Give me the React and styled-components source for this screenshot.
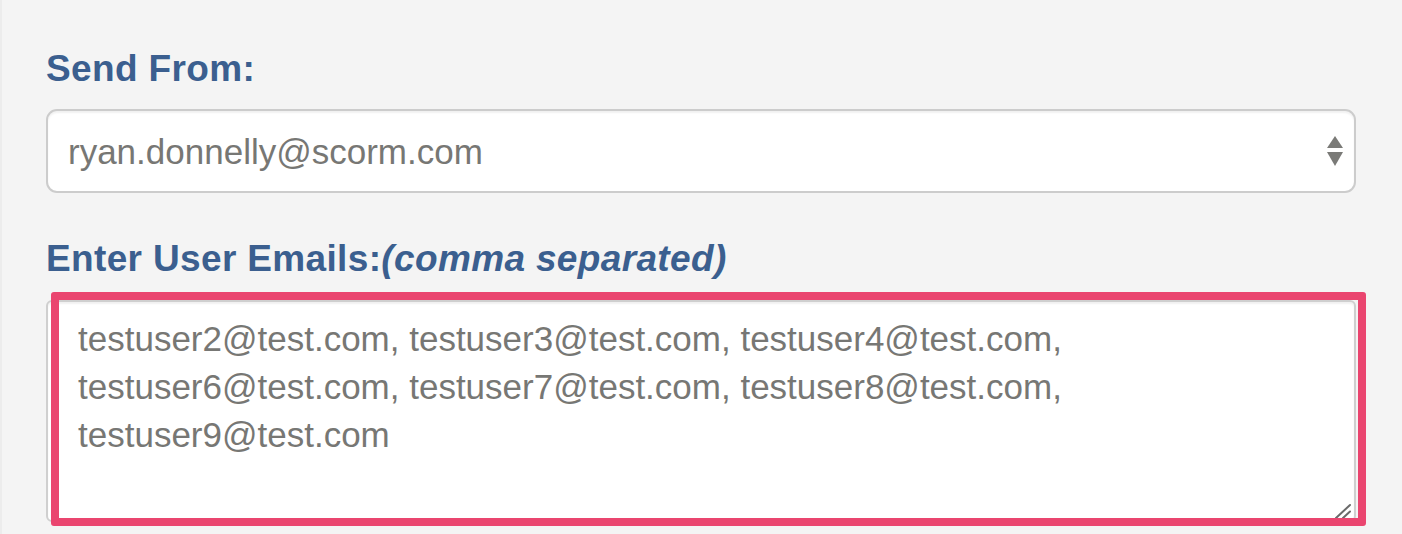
import React, { useState } from 'react';
import styled, { createGlobalStyle } from 'styled-components';

const GlobalStyle = createGlobalStyle`
	html, body {
		margin: 0;
		padding: 0;
		background: #f4f4f4;
	}
	body {
		font-family: 'Liberation Sans', Arial, Helvetica, sans-serif;
	}
`;

const Page = styled.div`
	width: 1402px;
	height: 534px;
	box-sizing: border-box;
	overflow: hidden;
	background: #f4f4f4;
	border-left: 2px solid #ececec;
	padding: 47px 46px 0 44px;
	display: flex;
	flex-direction: column;
`;

const Field = styled.div`
	display: flex;
	flex-direction: column;
	margin-bottom: ${(props) => props.gap || 0}px;
`;

const Label = styled.label`
	display: block;
	font-size: 37px;
	line-height: 44px;
	font-weight: 700;
	letter-spacing: 0.35px;
	color: #3b5f8f;
	margin-bottom: ${(props) => props.gap || 18}px;
`;

const Hint = styled.em`
	font-style: italic;
	font-weight: 700;
`;

const SelectWrap = styled.div`
	position: relative;
	width: 100%;
`;

const Select = styled.select`
	appearance: none;
	-webkit-appearance: none;
	width: 100%;
	height: 84px;
	box-sizing: border-box;
	border: 2px solid #cccccc;
	border-radius: 11px;
	background: #ffffff;
	box-shadow: inset 0 2px 2px rgba(0, 0, 0, 0.06);
	padding: 0 60px 0 20px;
	font-family: inherit;
	font-size: 35px;
	color: #777774;
	outline: none;
`;

const Arrows = styled.svg`
	position: absolute;
	right: 12px;
	top: 27px;
	pointer-events: none;
`;

const AreaWrap = styled.div`
	position: relative;
	width: 100%;
`;

const TextArea = styled.textarea`
	display: block;
	width: 100%;
	height: 222px;
	box-sizing: border-box;
	border: 2px solid #cfcfcf;
	border-radius: 6px;
	background: #ffffff;
	box-shadow: inset 0 2px 2px rgba(0, 0, 0, 0.06);
	padding: 13px 20px 0 30px;
	font-family: inherit;
	font-size: 35px;
	line-height: 48px;
	color: #777774;
	outline: none;
	resize: none;
`;

const Grip = styled.svg`
	position: absolute;
	right: 4px;
	bottom: 3px;
	pointer-events: none;
`;

const Highlight = styled.div`
	position: absolute;
	top: -8px;
	left: 5px;
	width: 1315px;
	height: 234px;
	box-sizing: border-box;
	border: 8px solid #ea456f;
	border-radius: 3px;
	pointer-events: none;
`;

const emails =
	'testuser2@test.com, testuser3@test.com, testuser4@test.com, testuser6@test.com, testuser7@test.com, testuser8@test.com, testuser9@test.com';

const App = () => {
	const [from, setFrom] = useState('ryan.donnelly@scorm.com');
	const [list, setList] = useState(emails);

	return (
		<>
			<GlobalStyle />
			<Page>
				<Field gap={44}>
					<Label htmlFor="send-from">Send From:</Label>
					<SelectWrap>
						<Select
							id="send-from"
							value={from}
							onChange={(e) => setFrom(e.target.value)}
						>
							<option>ryan.donnelly@scorm.com</option>
						</Select>
						<Arrows width="18" height="32" viewBox="0 0 18 32">
							<path d="M9 0 L17 12 L1 12 Z" fill="#7a7a77" />
							<path d="M1 16 L17 16 L9 30 Z" fill="#7a7a77" />
						</Arrows>
					</SelectWrap>
				</Field>
				<Field>
					<Label htmlFor="user-emails" gap={19}>
						Enter User Emails:<Hint>(comma separated)</Hint>
					</Label>
					<AreaWrap>
						<TextArea
							id="user-emails"
							value={list}
							onChange={(e) => setList(e.target.value)}
						/>
						<Grip width="18" height="16" viewBox="0 0 18 16">
							<path
								d="M2 15 L16 2 M9 15 L16 8.5"
								stroke="#6a6a6a"
								strokeWidth="2"
								strokeLinecap="round"
							/>
						</Grip>
						<Highlight />
					</AreaWrap>
				</Field>
			</Page>
		</>
	);
};

export default App;
